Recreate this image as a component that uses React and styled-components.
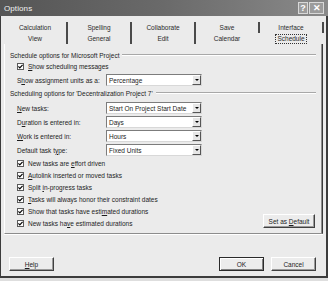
import styled, { createGlobalStyle } from "styled-components";

const GlobalStyle = createGlobalStyle`
  html, body {
    margin: 0;
    padding: 0;
    background: #dedede;
  }
  body {
    font-family: "Liberation Sans", Arial, sans-serif;
  }
`;

const Dialog = styled.div`
  width: 328px;
  height: 278px;
  display: flex;
  flex-direction: column;
  font-size: 6.5px;
  color: #1c1c1c;
`;

const TitleBar = styled.div`
  height: 16px;
  flex: none;
  display: flex;
  align-items: center;
  padding: 0 4px 0 4px;
  background: linear-gradient(to right, #555 0%, #6a6a6a 50%, #8a8a8a 100%);
`;

const Title = styled.span`
  font-size: 8px;
  color: #f2f2f2;
  letter-spacing: 0.1px;
`;

const TitleButtons = styled.div`
  margin-left: auto;
  display: flex;
  gap: 1px;
`;

const CaptionButton = styled.div`
  width: ${(p) => p.$w}px;
  height: 12px;
  box-sizing: border-box;
  display: flex;
  align-items: center;
  justify-content: center;
  background: #9c9c9c;
  border: 1px solid #d8d8d8;
  color: #fff;
  font-size: 9px;
  font-weight: bold;
`;

const Body = styled.div`
  flex: 1;
  display: flex;
  flex-direction: column;
  background: #ebebeb;
  border-left: 1px solid #3c3c3c;
  border-right: 2px solid #3c3c3c;
  border-bottom: 2px solid #3c3c3c;
`;

const TabStrip = styled.div`
  margin: 6px 3px 0 3px;
  display: grid;
  grid-template-columns: repeat(5, 64px);
  grid-template-rows: 11px 11px;
`;

const Tab = styled.div`
  display: flex;
  align-items: center;
  justify-content: center;
  color: #2a2a2a;
  border-right: ${(p) => (p.$sep ? "2px solid #4a4a4a" : "2px solid transparent")};
`;

const Focus = styled.span`
  border: 1px dotted #333;
  padding: 0 1px;
  line-height: 8px;
`;

const Panel = styled.div`
  height: 190px;
  box-sizing: border-box;
  margin: 0 3px;
  padding: 6px 6px 0 12px;
  display: flex;
  flex-direction: column;
  border-left: 1px solid #fff;
  border-right: 1px solid #3a3a3a;
  border-bottom: 1px solid #8c8c8c;
  box-shadow: inset -1px 0 #8c8c8c, 0 1px #fff;
`;

const GroupHeader = styled.div`
  height: 10px;
  margin-left: -7px;
  margin-top: ${(p) => p.$mt || 0}px;
  display: flex;
  align-items: center;

  &::after {
    content: "";
    flex: 1;
    margin-left: 3px;
    border-top: 1px solid #a8a8a8;
    border-bottom: 1px solid #fff;
  }
`;

const CheckRow = styled.label`
  height: 12px;
  display: flex;
  align-items: center;
  gap: 4px;
`;

const Box = styled.span`
  width: 7px;
  height: 7px;
  box-sizing: border-box;
  background: #fff;
  border: 1px solid #5a5a5a;
  display: flex;
  align-items: center;
  justify-content: center;
`;

const FieldRow = styled.div`
  height: 14px;
  margin-top: ${(p) => p.$mt || 0}px;
  display: flex;
  align-items: center;
`;

const FieldLabel = styled.span`
  width: 89px;
`;

const Select = styled.div`
  width: 96px;
  height: 12px;
  box-sizing: border-box;
  display: flex;
  align-items: center;
  background: #fff;
  border: 1px solid #7c7c7c;
  border-right-color: #d8d8d8;
  border-bottom-color: #d8d8d8;
  padding-left: 2px;
`;

const SelectText = styled.span`
  flex: 1;
`;

const Arrow = styled.span`
  width: 9px;
  height: 10px;
  box-sizing: border-box;
  display: flex;
  align-items: center;
  justify-content: center;
  background: #e6e6e6;
  border: 1px solid #fff;
  border-right-color: #555;
  border-bottom-color: #555;

  &::before {
    content: "";
    border-left: 2px solid transparent;
    border-right: 2px solid transparent;
    border-top: 2px solid #000;
  }
`;

const Bottom = styled.div`
  display: flex;
  align-items: flex-end;
  justify-content: space-between;
`;

const CheckList = styled.div`
  display: flex;
  flex-direction: column;
`;

const Button = styled.button`
  width: ${(p) => p.$w || 45}px;
  height: 14px;
  padding: 0;
  box-sizing: border-box;
  font-family: inherit;
  font-size: 6.5px;
  color: #1c1c1c;
  background: #ececec;
  border: 1px solid;
  border-color: ${(p) =>
    p.$default ? "#2a2a2a" : "#fff #404040 #404040 #fff"};
  box-shadow: ${(p) =>
    p.$default
      ? "inset 1px 1px #fff, inset -1px -1px #808080"
      : "inset -1px -1px #9a9a9a"};
`;

const SetDefault = styled(Button)`
  margin-bottom: 1px;
  margin-right: 1px;
`;

const Footer = styled.div`
  flex: 1;
  display: flex;
  align-items: flex-start;
  gap: 7px;
  padding: 23px 10px 0 8px;
`;

const Spacer = styled.div`
  flex: 1;
`;

const Check = () => (
  <Box>
    <svg width="5" height="5" viewBox="0 0 5 5">
      <path d="M0.4 2.4 L1.8 3.8 L4.6 0.8" fill="none" stroke="#000" strokeWidth="1.2" />
    </svg>
  </Box>
);

const Key = styled.u`
  text-decoration-thickness: 0.5px;
  text-underline-offset: 1px;
`;

const checks = [
  ["New tasks are ", "e", "ffort driven"],
  ["", "A", "utolink inserted or moved tasks"],
  ["Split ", "i", "n-progress tasks"],
  ["", "T", "asks will always honor their constraint dates"],
  ["Show that tasks have esti", "m", "ated durations"],
  ["New tasks ha", "v", "e estimated durations"],
];

const fields = [
  ["", "N", "ew tasks:", "Start On Project Start Date"],
  ["D", "u", "ration is entered in:", "Days"],
  ["", "W", "ork is entered in:", "Hours"],
  ["Default task t", "y", "pe:", "Fixed Units"],
];

const row1 = ["Calculation", "Spelling", "Collaborate", "Save", "Interface"];
const row2 = ["View", "General", "Edit", "Calendar"];

export default function App() {
  return (
    <>
      <GlobalStyle />
      <Dialog>
        <TitleBar>
          <Title>Options</Title>
          <TitleButtons>
            <CaptionButton $w={10}>?</CaptionButton>
            <CaptionButton $w={15}>✕</CaptionButton>
          </TitleButtons>
        </TitleBar>
        <Body>
          <TabStrip>
            {row1.map((t) => (
              <Tab key={t} $sep>
                {t}
              </Tab>
            ))}
            {row2.map((t, i) => (
              <Tab key={t} $sep={i < 3}>
                {t}
              </Tab>
            ))}
            <Tab>
              <Focus>Schedule</Focus>
            </Tab>
          </TabStrip>
          <Panel>
            <GroupHeader>Schedule options for Microsoft Project</GroupHeader>
            <CheckRow>
              <Check />
              <span>
                <Key>S</Key>how scheduling messages
              </span>
            </CheckRow>
            <FieldRow $mt={1}>
              <FieldLabel>
                S<Key>h</Key>ow assignment units as a:
              </FieldLabel>
              <Select>
                <SelectText>Percentage</SelectText>
                <Arrow />
              </Select>
            </FieldRow>
            <GroupHeader $mt={1}>
              Scheduling options for 'Decentralization Project 7'
            </GroupHeader>
            {fields.map(([a, k, b, v], i) => (
              <FieldRow key={v} $mt={i === 0 ? 3 : 0}>
                <FieldLabel>
                  {a}
                  <Key>{k}</Key>
                  {b}
                </FieldLabel>
                <Select>
                  <SelectText>{v}</SelectText>
                  <Arrow />
                </Select>
              </FieldRow>
            ))}
            <Bottom>
              <CheckList>
                {checks.map(([a, k, b]) => (
                  <CheckRow key={b}>
                    <Check />
                    <span>
                      {a}
                      <Key>{k}</Key>
                      {b}
                    </span>
                  </CheckRow>
                ))}
              </CheckList>
              <SetDefault $w={52}>
                Set as <Key>D</Key>efault
              </SetDefault>
            </Bottom>
          </Panel>
          <Footer>
            <Button>
              <Key>H</Key>elp
            </Button>
            <Spacer />
            <Button $default>OK</Button>
            <Button>Cancel</Button>
          </Footer>
        </Body>
      </Dialog>
    </>
  );
}
